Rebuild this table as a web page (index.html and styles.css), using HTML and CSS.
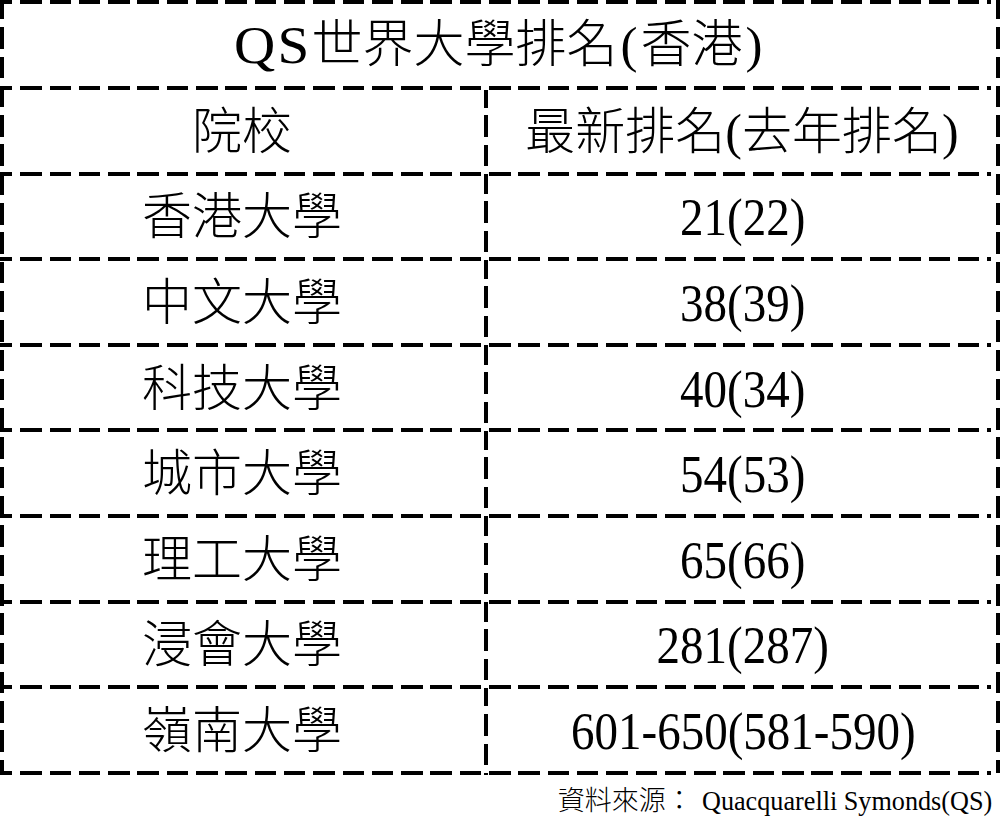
FILE: index.html
```html
<!DOCTYPE html>
<html lang="zh-Hant">
<head>
<meta charset="utf-8">
<title>QS世界大學排名(香港)</title>
<link rel="stylesheet" href="styles.css">
</head>
<body>
<div class="table">
  <div class="row title-row"><div class="cell"><span class="wide">QS</span>世界大學排名<span class="paren">(</span>香港<span class="paren">)</span></div></div>
  <div class="row"><div class="cell">院校</div><div class="cell right">最新排名(去年排名)</div></div>
  <div class="row"><div class="cell">香港大學</div><div class="cell right num"><span>21(22)</span></div></div>
  <div class="row"><div class="cell">中文大學</div><div class="cell right num"><span>38(39)</span></div></div>
  <div class="row"><div class="cell">科技大學</div><div class="cell right num"><span>40(34)</span></div></div>
  <div class="row"><div class="cell">城市大學</div><div class="cell right num"><span>54(53)</span></div></div>
  <div class="row"><div class="cell">理工大學</div><div class="cell right num"><span>65(66)</span></div></div>
  <div class="row"><div class="cell">浸會大學</div><div class="cell right num"><span>281(287)</span></div></div>
  <div class="row"><div class="cell">嶺南大學</div><div class="cell right num"><span>601-650(581-590)</span></div></div>
</div>
<div class="source">資料來源：<span class="latin">Quacquarelli Symonds(QS)</span></div>
</body>
</html>
```

FILE: styles.css
```css
html, body {
  margin: 0;
  padding: 0;
  background: #fff;
}

body {
  width: 1000px;
  font-family: "Liberation Serif", "Noto Sans CJK TC", serif;
  color: #000;
}

.table {
  width: 1000px;
  padding-top: 2px;
  background-image:
    repeating-linear-gradient(to right, #000 0 21.5px, transparent 21.5px 29.3px),
    repeating-linear-gradient(to bottom, #000 0 21.5px, transparent 21.5px 29.3px),
    repeating-linear-gradient(to bottom, #000 0 21.5px, transparent 21.5px 29.3px);
  background-size: 100% 4px, 4px 100%, 4px 100%;
  background-position: -9px 0, 0 -2px, 996px -2px;
  background-repeat: no-repeat;
}

.row {
  display: grid;
  grid-template-columns: 484px 1fr;
  height: 85.6px;
  background-image: repeating-linear-gradient(to right, #000 0 21.5px, transparent 21.5px 29.3px);
  background-size: 100% 4px;
  background-position: -9px 100%;
  background-repeat: no-repeat;
}

.title-row {
  grid-template-columns: 1fr;
  height: 88px;
}

.cell {
  display: flex;
  align-items: center;
  justify-content: center;
  font-size: 50px;
  line-height: 1;
  padding-bottom: 2px;
  white-space: nowrap;
  font-weight: 300;
}

.title-row .cell {
  font-size: 51px;
}

.wide {
  display: inline-block;
  font-weight: 400;
  transform: scale(1.12, 1.04);
  transform-origin: left center;
  margin-right: 8px;
  letter-spacing: 2px;
}

.paren {
  font-weight: 400;
  padding: 0 3px;
}

.right {
  background-image: repeating-linear-gradient(to bottom, #000 0 21.5px, transparent 21.5px 29.3px);
  background-size: 4px calc(100% + 4px);
  background-position: 0 -4px;
  background-repeat: no-repeat;
}

.num {
  font-size: 50px;
  font-weight: 400;
  padding-left: 2px;
}

.num span {
  display: inline-block;
  transform: scale(0.94, 1.05);
}

.source {
  text-align: right;
  font-size: 27px;
  font-weight: 300;
  padding: 10px 8px 0 0;
  line-height: 1.2;
}

.source .latin {
  display: inline-block;
  font-weight: 400;
  transform: scaleX(0.97);
  transform-origin: right center;
}
```
